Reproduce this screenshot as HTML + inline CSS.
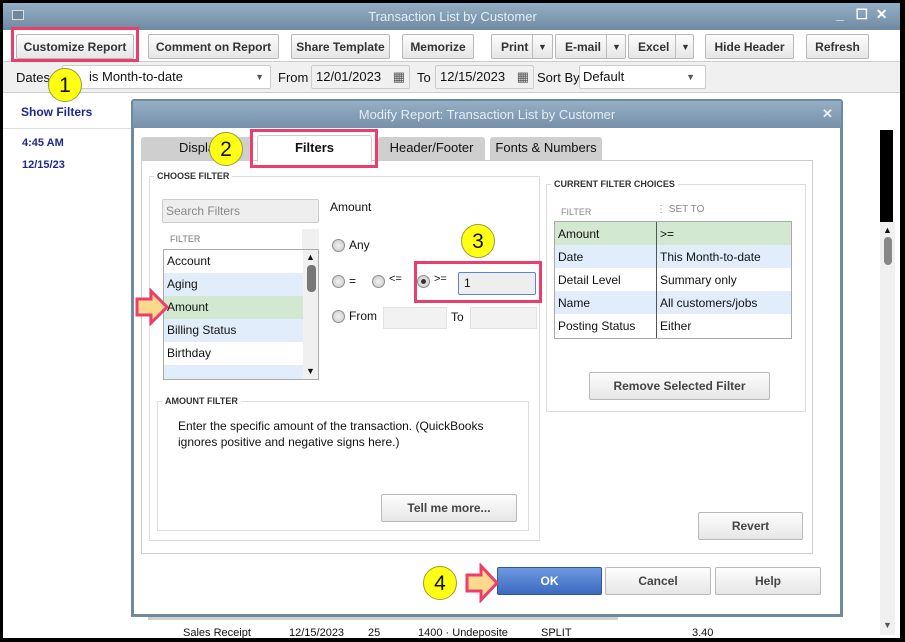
<!DOCTYPE html>
<html><head><style>
*{box-sizing:border-box;margin:0;padding:0}
body{width:905px;height:642px;overflow:hidden;background:#000;font-family:"Liberation Sans",sans-serif;font-size:12px;color:#111;position:relative}
.a{position:absolute}
.btn{position:absolute;border:1px solid #b9b9b9;border-radius:2px;background:linear-gradient(#fdfdfd,#e6e6e6);text-align:center;font-size:12px;color:#222}
.tb{font-weight:bold;color:#333;line-height:24px}
.gb{position:absolute;border:1px solid #dcdcdc}
.gl{position:absolute;background:#fff;font-size:9px;font-weight:bold;color:#333;padding:0 3px;top:-6px;left:4px}
.circ{position:absolute;width:34px;height:34px;border-radius:50%;background:#ffff14;border:1px solid #9a9a40;font-size:21px;text-align:center;line-height:33px;color:#111}
.pink{position:absolute;border:3px solid #ec3e6b}
.radio{position:absolute;width:13px;height:13px;border-radius:50%;border:1px solid #8c8c8c;background:radial-gradient(#f0f0f0,#c8c8c8)}
.row{position:absolute;left:0;height:23px;line-height:23px;padding-left:3px;font-size:12px;width:139px}
.br{position:absolute;top:627px;font-size:11px}
</style></head><body>
<div class="a" style="left:3px;top:3px;width:897px;height:635px;background:#fff"></div>
<div class="a" style="left:3px;top:3px;width:897px;height:27px;background:linear-gradient(#93aec4,#6f8ba3)"></div>
<div class="a" style="left:12px;top:10px;width:12px;height:10px;border:1px solid #ddd;background:#6d879d"></div>
<div class="a" style="left:0;top:9px;width:905px;text-align:center;color:#e6edf3;font-size:13px">Transaction List by Customer</div>
<div class="a" style="left:836px;top:6px;color:#fff;font-size:14px;font-weight:bold">_&nbsp;&nbsp;&nbsp;☐&nbsp;&nbsp;✕</div>
<div class="a" style="left:3px;top:30px;width:897px;height:32px;background:#fff;border-bottom:1px solid #ccc"></div>
<div class="btn tb" style="left:16px;top:34px;width:118px;height:25px">Customize Report</div>
<div class="btn tb" style="left:148px;top:34px;width:131px;height:25px">Comment on Report</div>
<div class="btn tb" style="left:291px;top:34px;width:99px;height:25px">Share Template</div>
<div class="btn tb" style="left:402px;top:34px;width:72px;height:25px">Memorize</div>
<div class="btn tb" style="left:491px;top:34px;width:62px;height:25px;text-align:left;padding-left:9px">Print<span style="position:absolute;left:40px;border-left:1px solid #bbb;padding-left:5px;font-size:9px">▼</span></div>
<div class="btn tb" style="left:555px;top:34px;width:71px;height:25px;text-align:left;padding-left:9px">E-mail<span style="position:absolute;left:50px;border-left:1px solid #bbb;padding-left:5px;font-size:9px">▼</span></div>
<div class="btn tb" style="left:628px;top:34px;width:66px;height:25px;text-align:left;padding-left:9px">Excel<span style="position:absolute;left:46px;border-left:1px solid #bbb;padding-left:5px;font-size:9px">▼</span></div>
<div class="btn tb" style="left:705px;top:34px;width:89px;height:25px">Hide Header</div>
<div class="btn tb" style="left:806px;top:34px;width:63px;height:25px">Refresh</div>
<div class="a" style="left:3px;top:62px;width:897px;height:31px;background:#f0f0f0;border-bottom:1px solid #ccc"></div>
<div class="a" style="left:16px;top:70px;font-size:13px">Dates</div>
<div class="a" style="left:62px;top:65px;width:209px;height:24px;background:#fff;border:1px solid #ccc;border-radius:2px;font-size:13px;line-height:22px;padding-left:26px">is Month-to-date<span style="position:absolute;right:6px;font-size:9px;color:#555">▼</span></div>
<div class="a" style="left:278px;top:70px;font-size:13px">From</div>
<div class="a" style="left:311px;top:65px;width:99px;height:24px;background:#f0f0f0;border:1px solid #ccc;border-radius:2px;font-size:13px;line-height:22px;padding-left:4px">12/01/2023<span style="position:absolute;right:4px;color:#555">▦</span></div>
<div class="a" style="left:417px;top:70px;font-size:13px">To</div>
<div class="a" style="left:435px;top:65px;width:99px;height:24px;background:#f0f0f0;border:1px solid #ccc;border-radius:2px;font-size:13px;line-height:22px;padding-left:4px">12/15/2023<span style="position:absolute;right:4px;color:#555">▦</span></div>
<div class="a" style="left:537px;top:70px;font-size:13px">Sort By</div>
<div class="a" style="left:579px;top:65px;width:127px;height:24px;background:#fff;border:1px solid #ccc;border-radius:2px;font-size:13px;line-height:22px;padding-left:3px">Default<span style="position:absolute;right:10px;font-size:9px;color:#555">▼</span></div>
<div class="a" style="left:21px;top:105px;color:#1d2a8c;font-weight:bold">Show Filters</div>
<div class="a" style="left:3px;top:128px;width:130px;border-top:1px solid #ddd"></div>
<div class="a" style="left:22px;top:137px;color:#1d2a8c;font-weight:bold;font-size:11px">4:45 AM</div>
<div class="a" style="left:22px;top:159px;color:#1d2a8c;font-weight:bold;font-size:11px">12/15/23</div>
<div class="a" style="left:880px;top:130px;width:13px;height:92px;background:#000"></div>
<div class="a" style="left:880px;top:222px;width:15px;height:413px;background:#f0f0f0"></div>
<div class="a" style="left:883px;top:225px;font-size:9px">▲</div>
<div class="a" style="left:884px;top:237px;width:8px;height:28px;background:#888;border-radius:4px"></div>
<div class="a" style="left:883px;top:620px;font-size:9px;color:#555">▼</div>
<div class="a" style="left:148px;top:614px;width:470px;height:6px;background:#d0d0d0"></div>
<div class="br" style="left:183px">Sales Receipt</div>
<div class="br" style="left:289px">12/15/2023</div>
<div class="br" style="left:368px">25</div>
<div class="br" style="left:418px">1400 · Undeposite</div>
<div class="br" style="left:541px">SPLIT</div>
<div class="br" style="left:692px">3.40</div>
<div class="a" style="left:131px;top:99px;width:712px;height:518px;background:#6f8aa0;border-radius:3px 3px 0 0"></div>
<div class="a" style="left:133px;top:101px;width:708px;height:27px;background:linear-gradient(#95afc5,#7590a8)"></div>
<div class="a" style="left:133px;top:107px;width:708px;text-align:center;color:#e6edf3;font-size:13px">Modify Report: Transaction List by Customer</div>
<div class="a" style="left:822px;top:106px;color:#eee;font-weight:bold;font-size:13px">✕</div>
<div class="a" style="left:134px;top:128px;width:706px;height:486px;background:#fff"></div>
<div class="a" style="left:141px;top:137px;width:112px;height:24px;background:#cfcfcf;border-radius:3px 3px 0 0;text-align:center;line-height:22px;font-size:13px">Displa</div>
<div class="a" style="left:257px;top:135px;width:115px;height:27px;background:#fff;border:1px solid #ccc;border-bottom:none;border-radius:3px 3px 0 0;text-align:center;line-height:24px;font-size:13px;font-weight:bold">Filters</div>
<div class="a" style="left:378px;top:137px;width:107px;height:24px;background:#cfcfcf;border-radius:3px 3px 0 0;text-align:center;line-height:22px;font-size:13px">Header/Footer</div>
<div class="a" style="left:490px;top:137px;width:112px;height:24px;background:#cfcfcf;border-radius:3px 3px 0 0;text-align:center;line-height:22px;font-size:13px">Fonts &amp; Numbers</div>
<div class="a" style="left:141px;top:160px;width:672px;height:394px;border:1px solid #ccc"></div>
<div class="a" style="left:258px;top:159px;width:113px;height:3px;background:#fff"></div>
<div class="gb" style="left:149px;top:176px;width:391px;height:365px"><div class="gl">CHOOSE FILTER</div></div>
<div class="a" style="left:162px;top:199px;width:157px;height:24px;background:#eee;border:1px solid #ccc;border-radius:2px;color:#888;font-size:12px;line-height:22px;padding-left:3px">Search Filters</div>
<div class="a" style="left:170px;top:234px;font-size:9px;color:#777">FILTER</div>
<div class="a" style="left:302px;top:229px;width:17px;height:20px;background:#f0f0f0"></div>
<div class="a" style="left:163px;top:249px;width:156px;height:131px;border:1px solid #aaa;background:#fff;overflow:hidden">
<div class="row" style="top:0">Account</div>
<div class="row" style="top:23px;background:#e1edfb">Aging</div>
<div class="row" style="top:46px;background:#d3e8d1">Amount</div>
<div class="row" style="top:69px;background:#e1edfb">Billing Status</div>
<div class="row" style="top:92px">Birthday</div>
<div class="row" style="top:115px;background:#e1edfb">&nbsp;</div>
<div class="a" style="left:139px;top:0;width:16px;height:130px;background:#f0f0f0"></div>
<div class="a" style="left:142px;top:2px;font-size:9px">▲</div>
<div class="a" style="left:143px;top:15px;width:9px;height:27px;background:#777;border-radius:4px"></div>
<div class="a" style="left:142px;top:116px;font-size:9px">▼</div>
</div>
<div class="a" style="left:330px;top:200px;font-size:12px">Amount</div>
<div class="radio" style="left:332px;top:239px"></div><div class="a" style="left:349px;top:238px">Any</div>
<div class="radio" style="left:332px;top:275px"></div><div class="a" style="left:349px;top:274px">=</div>
<div class="radio" style="left:372px;top:275px"></div><div class="a" style="left:389px;top:273px;font-size:11px">&lt;=</div>
<div class="radio" style="left:417px;top:275px"><div style="width:5px;height:5px;background:#333;border-radius:50%;margin:3px"></div></div><div class="a" style="left:434px;top:273px;font-size:11px">&gt;=</div>
<div class="a" style="left:458px;top:272px;width:78px;height:23px;background:#eee;border:1px solid #5b86c7;border-radius:2px;padding-left:5px;line-height:21px">1</div>
<div class="radio" style="left:332px;top:310px"></div><div class="a" style="left:349px;top:309px">From</div>
<div class="a" style="left:383px;top:307px;width:64px;height:22px;background:#f2f2f2;border:1px solid #e2e2e2"></div>
<div class="a" style="left:451px;top:310px">To</div>
<div class="a" style="left:470px;top:307px;width:67px;height:22px;background:#f2f2f2;border:1px solid #e2e2e2"></div>
<div class="gb" style="left:157px;top:401px;width:372px;height:130px"><div class="gl">AMOUNT FILTER</div></div>
<div class="a" style="left:178px;top:418px;width:340px;font-size:12px;line-height:16px">Enter the specific amount of the transaction. (QuickBooks ignores positive and negative signs here.)</div>
<div class="btn" style="left:381px;top:494px;width:136px;height:28px;line-height:26px;font-weight:bold;color:#444">Tell me more...</div>
<div class="gb" style="left:546px;top:184px;width:260px;height:228px"><div class="gl">CURRENT FILTER CHOICES</div></div>
<div class="a" style="left:561px;top:207px;font-size:9px;color:#888">FILTER</div>
<div class="a" style="left:656px;top:204px;font-size:10px;color:#888">⋮ SET TO</div>
<div class="a" style="left:554px;top:221px;width:238px;height:118px;border:1px solid #aaa;background:#fff;font-size:12px">
<div class="a" style="left:0;top:0;width:236px;height:23px;background:#d3e8d1"></div>
<div class="a" style="left:0;top:23px;width:236px;height:23px;background:#e1edfb"></div>
<div class="a" style="left:0;top:69px;width:236px;height:23px;background:#e1edfb"></div>
<div class="a" style="left:101px;top:0;height:116px;border-left:1px solid #555"></div>
<div class="a" style="left:3px;top:5px">Amount</div><div class="a" style="left:105px;top:5px">&gt;=</div>
<div class="a" style="left:3px;top:28px">Date</div><div class="a" style="left:105px;top:28px">This Month-to-date</div>
<div class="a" style="left:3px;top:51px">Detail Level</div><div class="a" style="left:105px;top:51px">Summary only</div>
<div class="a" style="left:3px;top:74px">Name</div><div class="a" style="left:105px;top:74px">All customers/jobs</div>
<div class="a" style="left:3px;top:97px">Posting Status</div><div class="a" style="left:105px;top:97px">Either</div>
</div>
<div class="btn" style="left:589px;top:372px;width:181px;height:28px;line-height:26px;font-weight:bold;color:#444">Remove Selected Filter</div>
<div class="btn" style="left:698px;top:512px;width:105px;height:28px;line-height:26px;font-weight:bold;color:#444">Revert</div>
<div class="a" style="left:497px;top:567px;width:105px;height:28px;background:linear-gradient(#6d9ae0,#3b69c0);border:1px solid #2e56a0;border-radius:2px;color:#fff;text-align:center;line-height:26px;font-weight:bold">OK</div>
<div class="btn" style="left:605px;top:567px;width:106px;height:28px;line-height:26px;font-weight:bold;color:#444">Cancel</div>
<div class="btn" style="left:715px;top:567px;width:106px;height:28px;line-height:26px;font-weight:bold;color:#444">Help</div>
<div class="pink" style="left:11px;top:27px;width:128px;height:35px"></div>
<div class="pink" style="left:250px;top:129px;width:128px;height:39px"></div>
<div class="pink" style="left:414px;top:261px;width:128px;height:42px"></div>
<div class="circ" style="left:48px;top:68px">1</div>
<div class="circ" style="left:209px;top:132px">2</div>
<div class="circ" style="left:461px;top:224px">3</div>
<div class="circ" style="left:423px;top:566px">4</div>
<svg class="a" style="left:134px;top:288px" width="36" height="38"><path d="M3 11 H17 V3 L33 19 L17 35 V27 H3 Z" fill="#fcd98d" stroke="#ec3e6b" stroke-width="3"/></svg>
<svg class="a" style="left:464px;top:563px" width="36" height="40"><path d="M3 12 H17 V3 L33 20 L17 37 V28 H3 Z" fill="#fcd98d" stroke="#ec3e6b" stroke-width="3"/></svg>
</body></html>
